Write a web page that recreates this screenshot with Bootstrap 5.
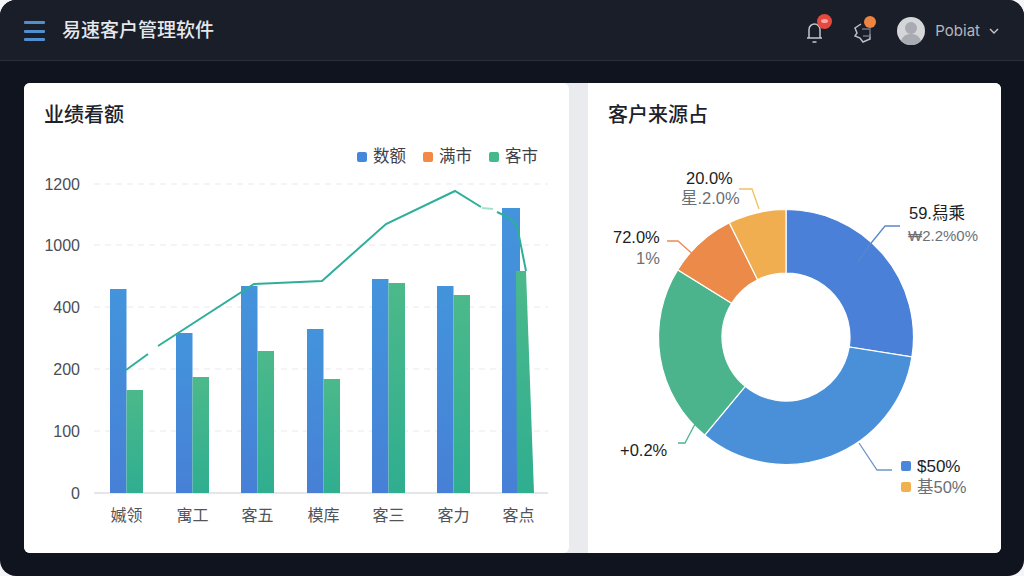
<!DOCTYPE html>
<html lang="zh-CN">
<head>
  <meta charset="UTF-8">
  <title>易速客户管理软件</title>
  <link href="https://cdn.jsdelivr.net/npm/bootstrap@5.3.0/dist/css/bootstrap.min.css" rel="stylesheet">
  <style>
    body {
      width: 1024px;
      height: 576px;
      overflow: hidden;
      background: #f4f5f7;
      font-family: "Liberation Sans", "Noto Sans CJK SC", sans-serif;
    }
    .app-shell {
      height: 576px;
      background: #10141f;
      border-radius: 16px;
      overflow: hidden;
    }
    .top-bar {
      height: 61px;
      padding: 2px 25px 0 24px;
      background: #1a1e28;
      border-bottom: 1px solid #2b2f39;
    }
    .menu-lines {
      width: 21px;
      gap: 5.5px;
    }
    .menu-lines span {
      height: 3px;
      background: #4f8fd0;
      border-radius: 1px;
    }
    .app-title {
      margin-left: 17px;
      font-size: 19px;
      font-weight: 500;
      color: #e6e8ec;
    }
    .top-icon {
      position: relative;
      width: 24px;
      height: 24px;
    }
    .icon-bell { margin-right: 25px; }
    .icon-net { margin-right: 21px; }
    .top-dot {
      position: absolute;
      border-radius: 50%;
    }
    .dot-red {
      left: 14px;
      top: -5px;
      width: 15px;
      height: 15px;
      background: #e5483f;
    }
    .dot-red::after {
      content: "";
      position: absolute;
      left: 4px;
      top: 5px;
      width: 7px;
      height: 4px;
      border-radius: 50%;
      background: #f7a9a0;
    }
    .dot-orange {
      left: 12px;
      top: -3px;
      width: 12px;
      height: 12px;
      background: #ee8440;
    }
    .user-name {
      margin: 0 9px 0 10px;
      font-family: "Inter", sans-serif;
      font-size: 15px;
      color: #b4b8bf;
    }
    .board {
      margin: 22px 23px 23px 24px;
      height: 470px;
      background: #e9ebef;
      border-radius: 6px;
      overflow: hidden;
    }
    .panel-left {
      width: 545px;
      border: 0;
      border-radius: 0 6px 6px 0;
    }
    .panel-right {
      width: 413px;
      margin-left: 19px;
      border: 0;
      border-radius: 0;
    }
    .panel-title {
      margin: 20px 0 0 20px;
      font-size: 20px;
      line-height: 24px;
      font-weight: 500;
      color: #1d2129;
    }
    .chart-legend {
      height: 24px;
      margin: 17px 0 2px;
      padding-right: 31px;
      gap: 17px;
      font-size: 16.5px;
      color: #3c4048;
    }
    .legend-box {
      display: inline-block;
      width: 10px;
      height: 10px;
      margin-right: 6px;
      border-radius: 2px;
    }
    #pieChart { margin-top: 23px; }
    svg text {
      font-family: "Liberation Sans", "Noto Sans CJK SC", sans-serif;
    }
    .axis-y { font-size: 16px; fill: #4a4e55; text-anchor: end; }
    .axis-x { font-size: 16px; fill: #50545b; text-anchor: middle; }
    .pie-main { font-size: 16.5px; fill: #1b1e24; }
    .pie-sub { font-size: 16.5px; fill: #6b6f76; }
    .pie-small { font-size: 15px; fill: #6b6f76; }
    .pie-big { font-size: 17px; fill: #1b1e24; }
    .leader { fill: none; stroke-width: 1.3; }
  </style>
</head>
<body>
  <div class="app-shell">
    <nav class="top-bar d-flex align-items-center">
      <div class="menu-lines d-flex flex-column">
        <span></span><span></span><span></span>
      </div>
      <div class="app-title">易速客户管理软件</div>

      <div class="top-icon icon-bell ms-auto">
        <svg width="24" height="24" viewBox="0 0 24 24" fill="none" stroke="#c4c7cc" stroke-width="1.5">
          <path d="M6 18V9.500a5.500 5.500 0 0 1 11 0V18M4 18h15M9.500 22h4"/>
        </svg>
        <span class="top-dot dot-red"></span>
      </div>
      <div class="top-icon icon-net">
        <svg width="24" height="24" viewBox="0 0 24 24" fill="none" stroke="#b9bdc4" stroke-width="1.500">
          <path d="M9 4 3 8l2 5-2 3 5 2 3 4 7-3v-5"/>
          <path d="M10 9h8v7h-7" stroke="#6b7486"/>
        </svg>
        <span class="top-dot dot-orange"></span>
      </div>
      <svg width="28" height="28" viewBox="0 0 28 28">
        <circle cx="14" cy="14" r="14" fill="#d5d6da"/>
        <circle cx="14" cy="11" r="6" fill="#a9abb2"/>
        <path d="M4 24c2-6 6-7 10-7s8 1 10 7a14 14 0 0 1-20 0z" fill="#a9abb2"/>
      </svg>
      <span class="user-name">Pobiat</span>
      <svg width="10" height="7" viewBox="0 0 10 7" fill="none" stroke="#c4c7cc" stroke-width="1.400">
        <path d="M1 1l4 4 4-4"/>
      </svg>
    </nav>

    <div class="board d-flex">
      <div class="card panel-left">
        <div class="panel-title">业绩看额</div>
        <div class="chart-legend d-flex justify-content-end align-items-center">
          <span><i class="legend-box" style="background:#4289dd"></i>数额</span>
          <span><i class="legend-box" style="background:#f08a45"></i>满市</span>
          <span><i class="legend-box" style="background:#45b98b"></i>客市</span>
        </div>
        <svg id="barChart" width="545" height="383" viewBox="24 170 545 383"></svg>
      </div>

      <div class="card panel-right">
        <div class="panel-title">客户来源占</div>
        <svg id="pieChart" width="413" height="403" viewBox="588 150 413 403"></svg>
      </div>
    </div>
  </div>

  <script>
    const NS = "http://www.w3.org/2000/svg";

    function draw(svg, tag, attrs, text) {
      const el = document.createElementNS(NS, tag);
      for (const k in attrs) el.setAttribute(k, attrs[k]);
      if (text) el.textContent = text;
      svg.appendChild(el);
      return el;
    }

    // Bar chart
    const bar = document.getElementById("barChart");
    bar.innerHTML = `
      <defs>
        <linearGradient id="gBlue" x1="0" y1="0" x2="0" y2="1">
          <stop offset="0" stop-color="#4394dc"/><stop offset="1" stop-color="#4780d6"/>
        </linearGradient>
        <linearGradient id="gGreen" x1="0" y1="0" x2="0" y2="1">
          <stop offset="0" stop-color="#4cb98a"/><stop offset="1" stop-color="#2fae90"/>
        </linearGradient>
      </defs>`;

    const ticks = [["1200", 184], ["1000", 245], ["400", 307], ["200", 369], ["100", 431], ["0", 493]];
    ticks.forEach(([label, y]) => {
      draw(bar, "text", { class: "axis-y", x: 80, y: y + 6 }, label);
      draw(bar, "line", y === 493
        ? { x1: 94, x2: 548, y1: y, y2: y, stroke: "#dcdee2", "stroke-width": 1.5 }
        : { x1: 94, x2: 548, y1: y, y2: y, stroke: "#e9eaed", "stroke-width": 1.2, "stroke-dasharray": "6 5" });
    });

    const groups = [
      { x: 110, blue: 289, green: 390, label: "媙领" },
      { x: 176, blue: 333, green: 377, label: "寓工" },
      { x: 241, blue: 286, green: 351, label: "客五" },
      { x: 307, blue: 329, green: 379, label: "模库" },
      { x: 372, blue: 279, green: 283, label: "客三" },
      { x: 437, blue: 286, green: 295, label: "客力" },
      { x: 502, blue: 208, green: null, label: "客点" }
    ];
    groups.forEach(g => {
      draw(bar, "rect", { x: g.x, y: g.blue, width: g.green ? 16.5 : 18, height: 493 - g.blue, fill: "url(#gBlue)" });
      if (g.green) draw(bar, "rect", { x: g.x + 16.5, y: g.green, width: 16.5, height: 493 - g.green, fill: "url(#gGreen)" });
      draw(bar, "text", { class: "axis-x", x: g.x + 16.5, y: 521 }, g.label);
    });
    // last green bar leans out towards the base
    draw(bar, "polygon", { points: "516,271 526,271 534,493 517,493", fill: "url(#gGreen)" });

    draw(bar, "polyline", { points: "126,370 148,354", fill: "none", stroke: "#2fae9b", "stroke-width": 2 });
    draw(bar, "polyline", { points: "158,346 254,284 322,281 386,224 455,191 481,207", fill: "none", stroke: "#2fae9b", "stroke-width": 2 });
    draw(bar, "line", { x1: 482, y1: 208, x2: 493, y2: 209, stroke: "#a5e0cf", "stroke-width": 2 });
    draw(bar, "polyline", { points: "497,212 510,218 517,226 526,271", fill: "none", stroke: "#2fae9b", "stroke-width": 2 });

    // Donut chart
    const pie = document.getElementById("pieChart");
    const cx = 786, cy = 337, R = 127.5, r = 64;
    const slices = [
      { from: 0, to: 99, color: "#4a80d8" },
      { from: 99, to: 219.6, color: "#4a90d9" },
      { from: 219.6, to: 301.8, color: "#4cb48c" },
      { from: 301.8, to: 333.6, color: "#ec8a4a" },
      { from: 333.6, to: 360, color: "#f0ae50" }
    ];
    function pt(rad, deg) {
      const a = deg * Math.PI / 180;
      return (cx + rad * Math.sin(a)).toFixed(2) + " " + (cy - rad * Math.cos(a)).toFixed(2);
    }
    slices.forEach(s => {
      const big = s.to - s.from > 180 ? 1 : 0;
      const d = `M${pt(R, s.from)} A${R} ${R} 0 ${big} 1 ${pt(R, s.to)} L${pt(r, s.to)} A${r} ${r} 0 ${big} 0 ${pt(r, s.from)} Z`;
      draw(pie, "path", { d, fill: s.color, stroke: "#fff", "stroke-width": 1.2 });
    });

    const leaders = [
      ["M900 226H885L872 242L858 262", "#5b86cc"],
      ["M739 189H752L759 209", "#f0c060"],
      ["M667 241H678L707 267", "#e98a55"],
      ["M678 443H685L695 424", "#4cb48c"],
      ["M859 443L877 470H892", "#6f95c8"]
    ];
    leaders.forEach(([d, c]) => draw(pie, "path", { class: "leader", d, stroke: c }));

    const labels = [
      ["pie-main", 686, 184, "20.0%"],
      ["pie-sub", 681, 204, "星.2.0%"],
      ["pie-main", 613, 243, "72.0%"],
      ["pie-sub", 636, 264, "1%"],
      ["pie-main", 909, 219, "59.舄乘"],
      ["pie-small", 908, 241, "₩2.2%0%"],
      ["pie-main", 620, 456, "+0.2%"],
      ["pie-big", 917, 472, "$50%"],
      ["pie-sub", 917, 493, "基50%"]
    ];
    labels.forEach(([c, x, y, t]) => draw(pie, "text", { class: c, x, y }, t));

    draw(pie, "rect", { x: 901, y: 461, width: 10, height: 10, rx: 2, fill: "#4a86dc" });
    draw(pie, "rect", { x: 901, y: 482, width: 10, height: 10, rx: 2, fill: "#f2b14f" });
  </script>

  <script src="https://cdn.jsdelivr.net/npm/bootstrap@5.3.0/dist/js/bootstrap.bundle.min.js"></script>
</body>
</html>
